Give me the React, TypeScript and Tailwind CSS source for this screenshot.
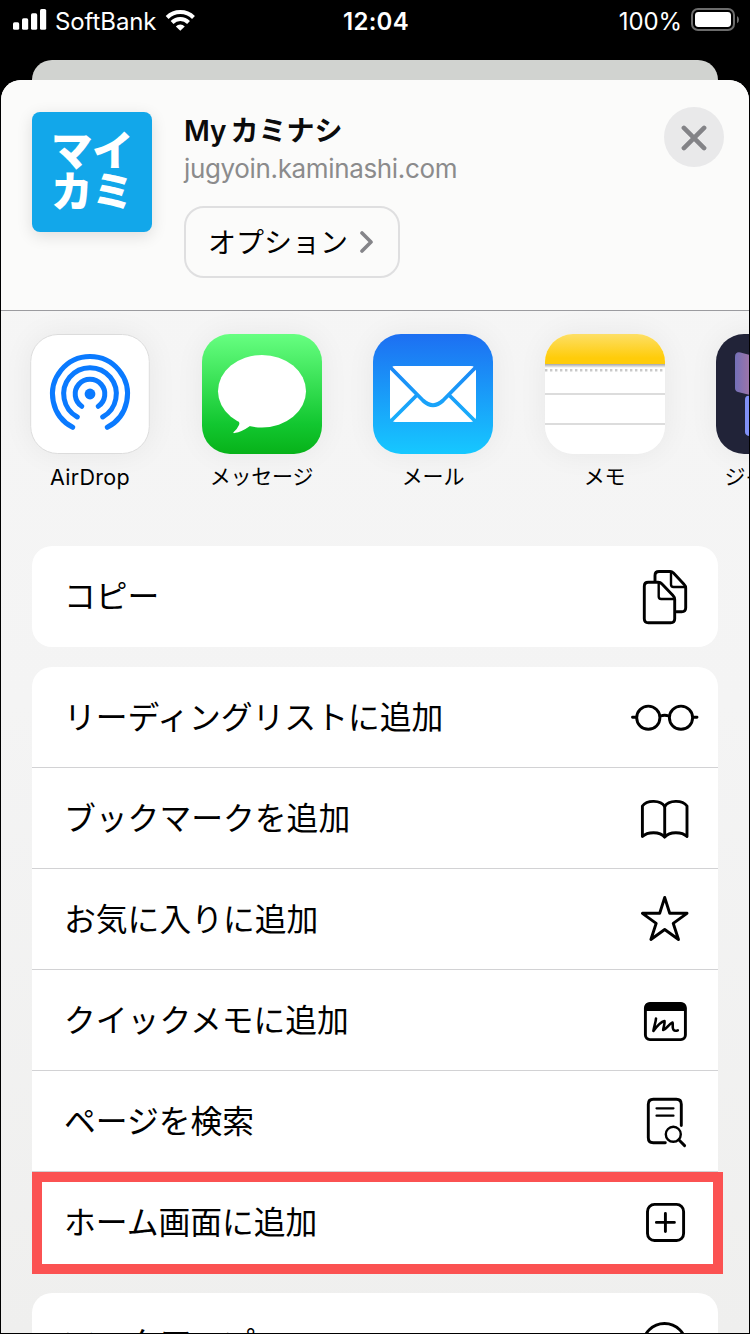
import React from "react";
import clsx from "clsx";

type IconProps = { children: React.ReactNode };

/* ---------- ステータスバー ---------- */

const StatusBar = () => (
  <div className="flex h-[40px] shrink-0 items-center justify-between pl-3 pr-[10px] text-[24px] text-white">
    <div className="flex w-[300px] items-center">
      <svg width="36" height="22" viewBox="0 0 36 22" fill="#fff">
        <rect x="0" y="13.300" width="6.200" height="7.500" rx="1.600" />
        <rect x="9" y="9.300" width="6.200" height="11.500" rx="1.600" />
        <rect x="18" y="4.300" width="6.200" height="16.500" rx="1.600" />
        <rect x="27" y="0" width="6.200" height="20.800" rx="1.600" />
      </svg>
      <span className="ml-[6px] pt-[3px] leading-[40px] tracking-[-0.1px]">SoftBank</span>
      <svg className="ml-[9px]" width="31" height="24" viewBox="0 0 32 24">
        <g fill="none" stroke="#fff" strokeWidth="4.200">
          <path d="M2.200 9.400a19.400 19.400 0 0 1 27.200 0" />
          <path d="M7.300 14.500a12.200 12.200 0 0 1 17 0" />
        </g>
        <path d="M15.800 23.200l-4.600-4.600a6.600 6.600 0 0 1 9.200 0z" fill="#fff" />
      </svg>
    </div>
    <span className="pt-[3px] font-semibold leading-[40px] tracking-[0.3px]">12:04</span>
    <div className="flex w-[300px] items-center justify-end">
      <span className="pt-[3px] leading-[40px] tracking-[-0.1px]">100%</span>
      <svg className="ml-[8px]" width="49" height="24" viewBox="0 0 49 24">
        <rect x="2" y="1" width="42" height="21" rx="6" fill="none" stroke="#6c6c6c" strokeWidth="2" />
        <rect x="5" y="4" width="36" height="15" rx="3.400" fill="#fff" />
        <path d="M47 8q2 1 2 3.600t-2 3.600z" fill="#6c6c6c" />
      </svg>
    </div>
  </div>
);

/* ---------- ヘッダー ---------- */

const SheetHeader = () => (
  <div className="flex h-[231px] shrink-0 items-start border-b border-[#9b9b9f] bg-[#fbfbfa] pl-[31px] pr-[25px]">
    <div className="mt-8 grid size-[120px] shrink-0 grid-cols-[41px_41px] content-center justify-center rounded-lg bg-[#12a7ea] text-[41.5px] font-black leading-[41px] text-white shadow-[0_4px_16px_rgba(0,0,0,0.12)]">
      <span>マ</span>
      <span>イ</span>
      <span>カ</span>
      <span>ミ</span>
    </div>
    <div className="ml-8 mt-[33px] flex flex-1 flex-col items-start">
      <h1 className="text-[28px] font-semibold leading-[36px] text-[#0b0b0b] [word-spacing:-3px]">My カミナシ</h1>
      <p className="pt-px text-[26px] leading-[38px] tracking-[-0.35px] text-[#8b8b8c]">jugyoin.kaminashi.com</p>
      <button className="mt-[18px] flex h-[72px] w-[216px] items-center rounded-[20px] border-2 border-[#dfdfe0] pl-[22px] text-[28px]">
        <span className="pt-px">オプション</span>
        <svg className="ml-[12px]" width="14" height="24" viewBox="0 0 14 24" fill="none" stroke="#858589" strokeWidth="3.600" strokeLinecap="round" strokeLinejoin="round">
          <path d="M2 3l9 9-9 9" />
        </svg>
      </button>
    </div>
    <button className="mt-[27px] flex size-[60px] items-center justify-center rounded-full bg-[#e9e9ea] pt-px">
      <svg width="26" height="26" viewBox="0 0 26 26" stroke="#838387" strokeWidth="4.600" strokeLinecap="round">
        <path d="M2.900 2.900l20.200 20.200M23.100 2.900L2.900 23.100" />
      </svg>
    </button>
  </div>
);

/* ---------- アプリ一覧 ---------- */

const AirDropIcon = () => (
  <svg width="120" height="120" viewBox="0 0 120 120" fill="none" stroke="#0a7aff" strokeWidth="5" strokeLinecap="round">
    <rect x="0.700" y="0.500" width="118.600" height="119" rx="27" fill="#fff" stroke="#dcdcdc" strokeWidth="1" />
    <path d="M42.700 93.300a37.500 37.500 0 1 1 34.600 0" />
    <path d="M47.300 83a26.300 26.300 0 1 1 25.400 0" />
    <path d="M51.700 72.300a14.800 14.800 0 1 1 16.600 0" />
    <circle cx="60" cy="60" r="5.400" fill="#0a7aff" stroke="none" />
  </svg>
);

const MessageIcon = () => (
  <svg width="120" height="120" viewBox="0 0 120 120">
    <defs>
      <linearGradient id="message" x1="0" y1="0" x2="0" y2="1">
        <stop offset="0" stopColor="#67ff81" />
        <stop offset="0.750" stopColor="#12c730" />
        <stop offset="1" stopColor="#07b219" />
      </linearGradient>
    </defs>
    <rect width="120" height="120" rx="28" fill="url(#message)" />
    <ellipse cx="60" cy="57.200" rx="44" ry="36.300" fill="#fff" />
    <path d="M34 84.500q4.500 3 3 6.500-2 4.500-5.500 7.200-.6 1.100 1 .9 7.500-1.300 15.500-7.100l8-2z" fill="#fff" />
  </svg>
);

const MailIcon = () => (
  <svg width="120" height="120" viewBox="0 0 120 120">
    <defs>
      <linearGradient id="mail" x1="0" y1="0" x2="0" y2="1">
        <stop offset="0" stopColor="#1d6ff2" />
        <stop offset="1" stopColor="#16c8ff" />
      </linearGradient>
      <mask id="envelope">
        <rect x="17" y="32" width="86" height="56" rx="5" fill="#fff" />
        <g fill="none" stroke="#000" strokeWidth="3.800">
          <path d="M17 33L50 66.500q10 9.500 20 0L103 33" />
          <path d="M17 88l27.500-27.500M103 88L75.500 60.500" />
        </g>
      </mask>
    </defs>
    <rect width="120" height="120" rx="28" fill="url(#mail)" />
    <rect width="120" height="120" fill="#fff" mask="url(#envelope)" />
  </svg>
);

const NotesIcon = () => (
  <svg width="120" height="120" viewBox="0 0 120 120">
    <defs>
      <linearGradient id="notes" x1="0" y1="0" x2="0" y2="1">
        <stop offset="0" stopColor="#fddf66" />
        <stop offset="0.800" stopColor="#ffcc0a" />
      </linearGradient>
      <linearGradient id="notesShade" x1="0" y1="0" x2="0" y2="1">
        <stop offset="0" stopColor="#a6a6a6" />
        <stop offset="1" stopColor="#fff" />
      </linearGradient>
      <clipPath id="notesClip">
        <rect width="120" height="120" rx="28" />
      </clipPath>
    </defs>
    <g clipPath="url(#notesClip)">
      <rect width="120" height="120" fill="#fff" />
      <rect width="120" height="30" fill="url(#notes)" />
      <rect y="30" width="120" height="4" fill="url(#notesShade)" />
      <path d="M0 36.300h120" stroke="#c9c9c9" strokeWidth="2.400" strokeDasharray="2.400 2.600" />
      <path d="M0 60h120M0 90h120" stroke="#dcdcdc" strokeWidth="2" />
    </g>
  </svg>
);

const JournalIcon = () => (
  <svg width="120" height="120" viewBox="0 0 120 120">
    <defs>
      <linearGradient id="journal">
        <stop offset="0" stopColor="#7370b8" />
        <stop offset="1" stopColor="#e67d8c" />
      </linearGradient>
    </defs>
    <rect width="120" height="120" rx="28" fill="#212338" />
    <path d="M19 23q0-5.500 5.500-4.500L58 27v40L22 58q-3-1-3-4z" fill="url(#journal)" />
    <path d="M29 66q0-5 5-4l24 6v38l-25-4q-4-1-4-4z" fill="#8090f5" />
  </svg>
);

const apps = [
  { name: "AirDrop", icon: <AirDropIcon />, latin: true },
  { name: "メッセージ", icon: <MessageIcon /> },
  { name: "メール", icon: <MailIcon /> },
  { name: "メモ", icon: <NotesIcon /> },
  { name: "ジャーナル", icon: <JournalIcon /> },
];

const AppRow = () => (
  <div className="flex h-[235px] shrink-0 gap-[51.5px] overflow-hidden pl-[29px] pt-[23px]">
    {apps.map((app) => (
      <div key={app.name} className="flex w-[120px] shrink-0 flex-col items-center">
        <div className="rounded-[28px] shadow-[0_0_30px_rgba(0,0,0,0.06)]">{app.icon}</div>
        <span
          className={clsx(
            "mt-[8px] whitespace-nowrap leading-[30px]",
            app.latin ? "text-[21.5px] tracking-[0.3px]" : "text-[21px] tracking-[-0.2px]"
          )}
        >
          {app.name}
        </span>
      </div>
    ))}
  </div>
);

/* ---------- アクション一覧 ---------- */

const ActionIcon = ({ children }: IconProps) => (
  <svg
    width="70"
    height="60"
    viewBox="0 0 70 60"
    fill="none"
    stroke="#000"
    strokeWidth="2.900"
    strokeLinecap="round"
    strokeLinejoin="round"
  >
    {children}
  </svg>
);

const CopyIcon = () => (
  <ActionIcon>
    <path d="M25 15.500V9.500q0-4 4-4h11q2 0 3.500 1.500l10.700 11.500q1.500 1.500 1.500 3.500v19.700q0 4-4 4H46.500" />
    <path d="M41 6v12.500q0 2.500 2.500 2.500H55" strokeWidth="2.400" />
    <path d="M18.300 16.300H28q2.500 0 4 1.700l11 11.500q1.700 1.700 1.700 4v19.200q0 4-4 4H18.300q-4 0-4-4V20.300q0-4 4-4z" />
    <path d="M28.700 17v13.500q0 2.500 2.500 2.500H44" strokeWidth="2.400" />
  </ActionIcon>
);

const GlassesIcon = () => (
  <ActionIcon>
    <circle cx="18.300" cy="30.700" r="11.600" />
    <circle cx="51" cy="30.700" r="11.600" />
    <path d="M30.500 29q4.200-1.600 8.300 0M2.500 30.200h3.500M63.500 30.200h3.500" />
  </ActionIcon>
);

const BookIcon = () => (
  <ActionIcon>
    <path d="M34.700 18.500c-4-6.500-17.500-7-22.300-.5v30.500c5-5 17.500-5.300 22.300.5 4.800-5.800 17.300-5.500 22.300-.5V18c-4.800-6.500-18.300-6-22.300.5z" />
    <path d="M34.700 18.500V49" />
  </ActionIcon>
);

const StarIcon = () => (
  <ActionIcon>
    <path d="M34.700 8.500l5 15.700 17.300.1-13.800 10 5.300 16.200-13.800-10-13.800 10 5.300-16.200-13.800-10 17.300-.1z" />
  </ActionIcon>
);

const QuickNoteIcon = () => (
  <ActionIcon>
    <rect x="15.400" y="13.400" width="40" height="36.200" rx="4.500" />
    <path d="M15.400 20.300V17.500q0-4 4-4h32q4 0 4 4V20.300z" fill="#000" strokeWidth="1.500" />
    <path
      d="M26 28.500c-.3 4.300-2.200 8.500-2.600 12.500 3.300-4.500 6.800-9 11.100-10 .6 3.300-1.200 6-1.300 9 3.300-.8 5.800-6.300 9.300-7.500.8 2.300-.5 4.900.8 6.900 1 1.400 2.700 1.700 4.500 1"
      strokeWidth="2.600"
    />
  </ActionIcon>
);

const FindIcon = () => (
  <ActionIcon>
    <path d="M51.300 34.500V13.300q0-5-5-5H23.300q-5 0-5 5v33.400q0 5 5 5h12" />
    <path d="M26.500 17.300h17M26.500 24.700h17" strokeWidth="2.200" />
    <circle cx="43.300" cy="43.300" r="7.500" strokeWidth="2.400" />
    <path d="M48.800 48.800l5.800 5.800" />
  </ActionIcon>
);

const AddIcon = () => (
  <ActionIcon>
    <rect x="17.500" y="12.400" width="36.100" height="36.100" rx="7" />
    <path d="M35.400 21.500v18M26.400 30.400h18" />
  </ActionIcon>
);

const MarkupIcon = () => (
  <ActionIcon>
    <circle cx="34.500" cy="32" r="21.500" />
  </ActionIcon>
);

type Action = { label: string; icon: React.ReactNode; highlighted?: boolean };

const actionGroups: Action[][] = [
  [{ label: "コピー", icon: <CopyIcon /> }],
  [
    { label: "リーディングリストに追加", icon: <GlassesIcon /> },
    { label: "ブックマークを追加", icon: <BookIcon /> },
    { label: "お気に入りに追加", icon: <StarIcon /> },
    { label: "クイックメモに追加", icon: <QuickNoteIcon /> },
    { label: "ページを検索", icon: <FindIcon /> },
    { label: "ホーム画面に追加", icon: <AddIcon />, highlighted: true },
  ],
  [{ label: "マークアップ", icon: <MarkupIcon /> }],
];

const ActionGroup = ({ actions }: { actions: Action[] }) => (
  <div className="rounded-[20px] bg-white">
    {actions.map((action, index) => (
      <div
        key={action.label}
        className={clsx(
          "relative flex h-[101px] items-center justify-between border-b pl-8 pr-[18px]",
          index < actions.length - 1 ? "border-[#d2d2d4]" : "border-transparent"
        )}
      >
        <span className="pt-[2px] text-[31.8px] leading-[46px]">{action.label}</span>
        {action.icon}
        {/* 注目枠 */}
        {action.highlighted && (
          <div className="absolute -right-[5px] left-0 top-0 h-[102px] border-10 border-[#fb5252]" />
        )}
      </div>
    ))}
  </div>
);

const App = () => {
  return (
    <div className="flex h-[1334px] w-[750px] flex-col overflow-hidden border-x border-b border-black bg-black font-['Inter','Noto_Sans_CJK_JP',sans-serif] text-black">
      <StatusBar />
      <div className="mx-[31px] mt-5 h-5 shrink-0 rounded-t-[20px] bg-[#d1d3d0]" />
      <div className="flex min-h-0 flex-1 flex-col overflow-hidden rounded-t-[20px] bg-linear-to-b from-[#f6f6f6] via-[#f4f4f4] to-[#efefee]">
        <SheetHeader />
        <AppRow />
        <div className="flex shrink-0 flex-col gap-5 px-[31px]">
          {actionGroups.map((actions) => (
            <ActionGroup key={actions[0].label} actions={actions} />
          ))}
        </div>
      </div>
    </div>
  );
};

export default App;
